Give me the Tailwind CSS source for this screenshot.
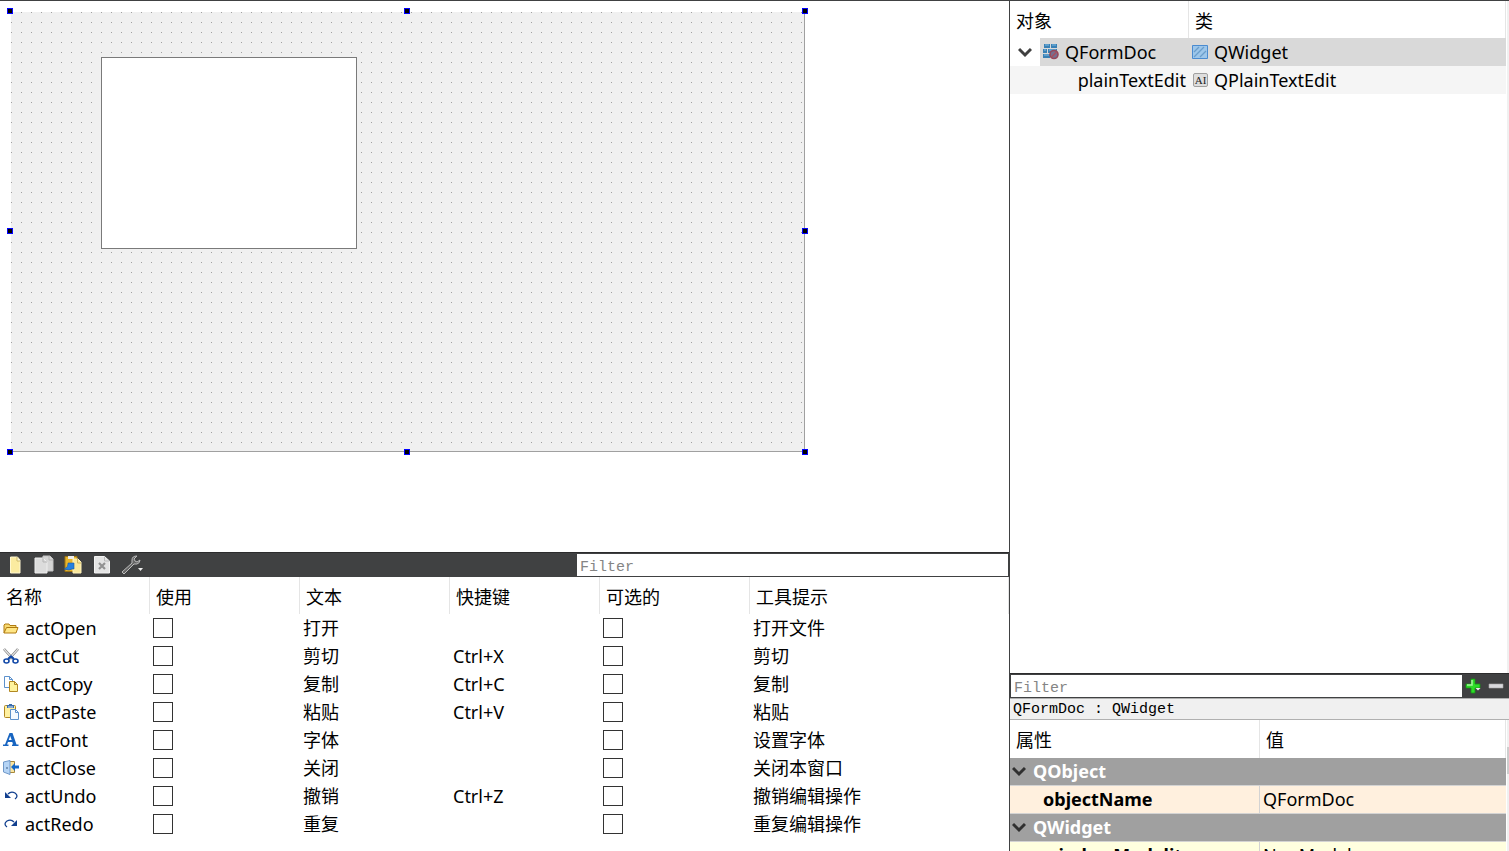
<!DOCTYPE html>
<html lang="zh-CN">
<head>
<meta charset="utf-8">
<title>QFormDoc</title>
<script src="https://cdn.jsdelivr.net/npm/@tailwindcss/browser@4"></script>
</head>
<body class="bg-white text-black text-[18px] leading-7 font-['Noto_Sans','Noto_Sans_CJK_SC',sans-serif]">
<div class="flex h-screen overflow-hidden border-t border-[#404142]">
  <main class="flex min-w-0 flex-1 flex-col border-r border-[#404142]">
    <section class="relative min-h-0 flex-1" aria-label="Form">
      <div class="absolute left-[11px] top-[11px] h-[440px] w-[794px] border-r border-b border-[#a0a0a0] [background:conic-gradient(from_270deg_at_1px_1px,#a0a0a0_90deg,#f0f0f0_0)_0_0/10px_10px]">
        <textarea aria-label="plainTextEdit" class="absolute left-[90px] top-[45px] h-48 w-64 resize-none border border-[#7a7a7a] bg-white outline-none"></textarea>
      </div>
      <i class="absolute left-[7px] top-[7px] size-1.5 border border-[#00f] bg-black"></i>
      <i class="absolute left-[404px] top-[7px] size-1.5 border border-[#00f] bg-black"></i>
      <i class="absolute left-[802px] top-[7px] size-1.5 border border-[#00f] bg-black"></i>
      <i class="absolute left-[7px] top-[227px] size-1.5 border border-[#00f] bg-black"></i>
      <i class="absolute left-[802px] top-[227px] size-1.5 border border-[#00f] bg-black"></i>
      <i class="absolute left-[7px] top-[448px] size-1.5 border border-[#00f] bg-black"></i>
      <i class="absolute left-[404px] top-[448px] size-1.5 border border-[#00f] bg-black"></i>
      <i class="absolute left-[802px] top-[448px] size-1.5 border border-[#00f] bg-black"></i>
    </section>
    <section aria-label="Actions">
      <div class="flex h-[25px] items-center border-t border-[#2c2c2d] bg-[#404142]">
        <div class="flex flex-1 items-center gap-[9px] pl-[5px]">
          <button aria-label="New" class="size-5"><svg viewBox="0 0 20 20" class="size-5"><path d="M5.500 2h7l2.500 3v13H5.500z" fill="#fbeba0" stroke="#fff8d2"/><path d="M12 2v4h3" fill="#fffbe5" stroke="#cdb968"/></svg></button>
          <button aria-label="Copy" class="size-5"><svg viewBox="0 0 20 20" class="size-5"><path d="M9 1h7l3 3v12H9z" fill="#d5d5d5" stroke="#c4c4c4"/><path d="M1 3h8l4 4v11H1z" fill="#dcdcdc" stroke="#eee"/><path d="M9 3v4h4M15 1v4h4" fill="none" stroke="#b5b5b5"/></svg></button>
          <button aria-label="Paste" class="size-5"><svg viewBox="0 0 20 20" class="size-5"><path d="M2 1.500h12v15H2z" fill="#e8b52c" stroke="#9d7414"/><path d="M5 1h6v3H5z" fill="#eee"/><path d="M10 4h5l3 3v11h-8z" fill="#fae89a" stroke="#fff3bd"/><path d="M14.500 4v4H18" fill="none" stroke="#ccb35d"/><path d="M1 14q4-1 4-5V8h6v6H9q-2 2-8 0z" fill="#2380e0" stroke="#1558aa" stroke-width=".6"/></svg></button>
          <button aria-label="Delete" class="size-5"><svg viewBox="0 0 20 20" class="size-5"><path d="M2.500 1.500h10l5 4.500v12h-15z" fill="#e4e4e4" stroke="#f3f3f3"/><path d="M12.500 2v4h5" fill="none" stroke="#bbb"/><path d="M7 8l6 6M13 8l-6 6" stroke="#929292" stroke-width="2.200"/></svg></button>
          <button aria-label="Configure" class="h-5 w-6"><svg viewBox="0 0 24 20" class="h-5 w-6"><path d="M16 1q-5 0-5 4v3L1 17l2 2L13 9h3q3-1 3-4l-3 2-2-1-1-2z" fill="#666" stroke="#bcbcbc"/><path d="M17 13h5l-2.500 3z" fill="#eee"/></svg></button>
        </div>
        <input type="text" placeholder="Filter" aria-label="Filter actions" class="mr-px h-[22px] w-[431px] bg-white px-[3px] pt-1 font-['Liberation_Mono',monospace] text-[15px] leading-[18px] outline-none placeholder:text-[#858585]">
      </div>
      <table class="mb-[13px] w-full table-fixed border-separate border-spacing-0 text-left">
        <colgroup><col class="w-[150px]"><col class="w-[150px]"><col class="w-[150px]"><col class="w-[150px]"><col class="w-[150px]"><col></colgroup>
        <thead><tr class="h-[37px] [&>th]:border-r [&>th]:border-[#e5e5e5] [&>th]:pl-1.5 [&>th]:pt-0.5 [&>th]:font-normal"><th>名称</th><th>使用</th><th>文本</th><th>快捷键</th><th>可选的</th><th>工具提示</th></tr></thead>
        <tbody id="actions"></tbody>
      </table>
    </section>
  </main>
  <aside class="flex w-[499px] shrink-0 flex-col">
    <div class="flex min-h-0 flex-1">
      <div class="min-w-0 flex-1 pr-px">
        <table class="w-full table-fixed border-separate border-spacing-0 text-left">
          <colgroup><col class="w-[179px]"><col></colgroup>
          <thead><tr class="h-[37px] [&>th]:border-r [&>th]:border-[#e5e5e5] [&>th]:pl-1.5 [&>th]:pt-0.5 [&>th]:font-normal"><th>对象</th><th>类</th></tr></thead>
          <tbody>
            <tr class="h-7">
              <td><div class="flex h-7 items-center"><button aria-label="Collapse QFormDoc" class="flex h-7 w-[30px] items-center justify-center"><svg viewBox="0 0 14 14" class="size-3.5"><path d="M1 4l6 6 6-6" fill="none" stroke="#404040" stroke-width="3"/></svg></button><div class="flex h-7 flex-1 items-center gap-1.5 bg-[#d9d9d9] pl-[3px]"><svg viewBox="0 0 16 16" class="size-4"><path d="M1 0h6v4H1zM8 0h6v4H8zM0 5h4v4H0zM5 5h9v4H5zM0 10h7v4H0z" fill="#3980b4"/><path d="M2 1h4M9 1h4M1 6h2M6 6h7M1 11h5" stroke="#82bce4"/><circle cx="11" cy="10.500" r="4" fill="#767090" stroke="#97475a" stroke-width="1.600"/><path d="M8.500 13l5-5" stroke="#a8505f" stroke-width="1.600"/></svg><span>QFormDoc</span></div></div></td>
              <td class="bg-[#d9d9d9]"><div class="flex items-center gap-1.5 pl-[3px]"><svg viewBox="0 0 16 16" class="size-4"><path d="M.5 1.500h15v13H.5z" fill="#9dc6ea" stroke="#4a8bd0"/><path d="M2 8l5-5M2 13L12 3M8 13l6-6" stroke="#6a9ecb" stroke-width="1.300"/></svg><span>QWidget</span></div></td>
            </tr>
            <tr class="h-7 bg-[#f5f5f5]">
              <td class="pr-[3px] text-right">plainTextEdit</td>
              <td><div class="flex items-center gap-1.5 pl-[3px]"><svg viewBox="0 0 16 16" class="size-4"><rect x="1.500" y="1.500" width="14" height="13" rx="1.500" fill="#dedede" stroke="#a0a0a0"/><text x="8.500" y="12" text-anchor="middle" font-family="Liberation Serif" font-size="11" fill="#222">AI</text></svg><span>QPlainTextEdit</span></div></td>
            </tr>
          </tbody>
        </table>
      </div>
      <div class="w-0.5 bg-[#f0f0f0]"></div>
    </div>
    <div class="flex h-[25px] items-center border-t border-[#2c2c2d] bg-[#404142]">
      <input type="text" placeholder="Filter" aria-label="Filter properties" class="ml-px h-[22px] min-w-0 flex-1 bg-white px-[3px] pt-1 font-['Liberation_Mono',monospace] text-[15px] leading-[18px] outline-none placeholder:text-[#858585]">
      <button aria-label="Add" class="ml-[3px] size-4"><svg viewBox="0 0 16 16" class="size-4"><path d="M6 1h4v5h5v4h-5v5H6v-5H1V6h5z" fill="#2ddd28" stroke="#169514" stroke-width=".8"/><path d="M7 2v5H2" fill="none" stroke="#a6f59c" stroke-width="1.500"/><path d="M10.500 10h5L13 12.500z" fill="#eee"/></svg></button>
      <button aria-label="Remove" class="ml-[7px] mr-[5px] size-4"><svg viewBox="0 0 16 16" class="size-4"><path d="M1 6h14v4H1z" fill="#d8d8dc" stroke="#aaa" stroke-width=".6"/></svg></button>
    </div>
    <div class="h-[22px] border-y border-[#b0b0b0] bg-[#f0f0f0] pl-[3px] pt-0.5 font-['Liberation_Mono',monospace] text-[15px] leading-[18px]">QFormDoc : QWidget</div>
    <div class="flex h-[131px] overflow-hidden">
      <div class="min-w-0 flex-1 pr-px">
        <table class="w-full table-fixed border-separate border-spacing-0 text-left">
          <colgroup><col class="w-[250px]"><col></colgroup>
          <thead><tr class="h-[38px] [&>th]:border-r [&>th]:border-[#e5e5e5] [&>th]:pl-1.5 [&>th]:pt-0.5 [&>th]:font-normal"><th>属性</th><th>值</th></tr></thead>
          <tbody class="leading-[27px] [&>tr]:h-7 [&>tr>*]:border-b [&>tr>*]:border-[#d3d3d3]">
            <tr class="bg-[#a0a0a0] text-white"><th colspan="2"><button class="flex items-center gap-[7px] pl-0.5 font-bold"><svg viewBox="0 0 14 14" class="size-3.5"><path d="M1 3l6 6 6-6" fill="none" stroke="#303030" stroke-width="3"/></svg>QObject</button></th></tr>
            <tr class="bg-[#fff0de]"><th class="border-r pl-[33px] font-bold">objectName</th><td class="pl-[3px]">QFormDoc</td></tr>
            <tr class="bg-[#a0a0a0] text-white"><th colspan="2"><button class="flex items-center gap-[7px] pl-0.5 font-bold"><svg viewBox="0 0 14 14" class="size-3.5"><path d="M1 3l6 6 6-6" fill="none" stroke="#303030" stroke-width="3"/></svg>QWidget</button></th></tr>
            <tr class="bg-[#ffffdf]"><th class="border-r pl-[33px] font-bold">windowModality</th><td class="pl-[3px]">NonModal</td></tr>
          </tbody>
        </table>
      </div>
      <div class="w-0.5 bg-[#f0f0f0] pt-[27px]"><div class="h-[27px] bg-[#cdcdcd]"></div></div>
    </div>
  </aside>
</div>
<script>
const icons = {
  open: '<path d="M1 13V5l1-1h4l1 1.500h6V8" fill="#f8da72" stroke="#b07b10"/><path d="M1 13l2.500-5.500h11.500L13 13z" fill="#ffe685" stroke="#b07b10" stroke-linejoin="round"/>',
  cut: '<path d="M1 1l9 10M15 1L6 11" stroke="#777" stroke-width="2.600"/><path d="M1 1l9 10M15 1L6 11" stroke="#e3e3e3" stroke-width="1.200"/><path d="M5 11l3-2.500 3 2.500" fill="none" stroke="#1249a8" stroke-width="2.200"/><ellipse cx="3.500" cy="13" rx="2.500" ry="2" fill="none" stroke="#1249a8" stroke-width="1.600"/><ellipse cx="12.500" cy="13" rx="2.500" ry="2" fill="none" stroke="#1249a8" stroke-width="1.600"/>',
  copy: '<path d="M1.500.5h5l3 3v8h-8z" fill="#fff" stroke="#5c91cc"/><path d="M6.500.5v3h3" fill="none" stroke="#5c91cc"/><path d="M6.500 5.500h5l3 3v7h-8z" fill="#fff39b" stroke="#b18722"/><path d="M11.500 5.500v3h3" fill="none" stroke="#b18722"/>',
  paste: '<rect x="1.500" y="1.500" width="11" height="12" rx="1" fill="#fff0a0" stroke="#b18722"/><path d="M4 1h2V0h3v1h2v3H4z" fill="#3c6ead"/><path d="M5 3h5" stroke="#d7e9fa"/><path d="M7.500 5.500h5l3 3v7h-8z" fill="#f5faff" stroke="#5c91cc"/><path d="M12.500 5.500v3h3" fill="none" stroke="#5c91cc"/>',
  font: '<path fill-rule="evenodd" d="M6.500 1h3l4 11.500h2V14H9v-1.500h1L9.300 10H5l-1 2.500h1.500V14H0v-1.500h2zM5.700 8h3L7.200 4z" fill="#1865c1"/>',
  close: '<path d="M6 1.500h5.500v11H6z" fill="#fae5a0" stroke="#a8883a"/><path d="M.5 2L7 .5v14L.5 12z" fill="#b5d4f5" stroke="#6f98c8"/><path d="M4 7v2" stroke="#365a85"/><path d="M8 7l4-4v2.500h4v3h-4V11z" fill="#1469c9"/>',
  undo: '<path d="M5 6q3-3 7-1 4 3 0 6" fill="none" stroke="#12408f" stroke-width="1.300"/><path d="M2 4v6h6z" fill="#12408f"/>',
  redo: '<path d="M11 6Q8 3 4 5q-4 3 0 6" fill="none" stroke="#12408f" stroke-width="1.300"/><path d="M14 4v6H8z" fill="#12408f"/>'
};
const rows = [
  ['open','actOpen','打开','','打开文件'],
  ['cut','actCut','剪切','Ctrl+X','剪切'],
  ['copy','actCopy','复制','Ctrl+C','复制'],
  ['paste','actPaste','粘贴','Ctrl+V','粘贴'],
  ['font','actFont','字体','','设置字体'],
  ['close','actClose','关闭','','关闭本窗口'],
  ['undo','actUndo','撤销','Ctrl+Z','撤销编辑操作'],
  ['redo','actRedo','重复','','重复编辑操作']
];
const box = label => `<input type="checkbox" aria-label="${label}" class="block size-5 appearance-none border border-[#333] bg-white checked:bg-[#333]">`;
document.getElementById('actions').innerHTML = rows.map(([i, n, t, k, tip]) => `<tr class="h-7 [&>td]:pl-[3px]"><td><div class="flex items-center gap-1.5"><svg viewBox="0 0 16 16" class="size-4">${icons[i]}</svg><span>${n}</span></div></td><td>${box(n + ' 使用')}</td><td>${t}</td><td>${k}</td><td>${box(n + ' 可选的')}</td><td>${tip}</td></tr>`).join('');
</script>
</body>
</html>
